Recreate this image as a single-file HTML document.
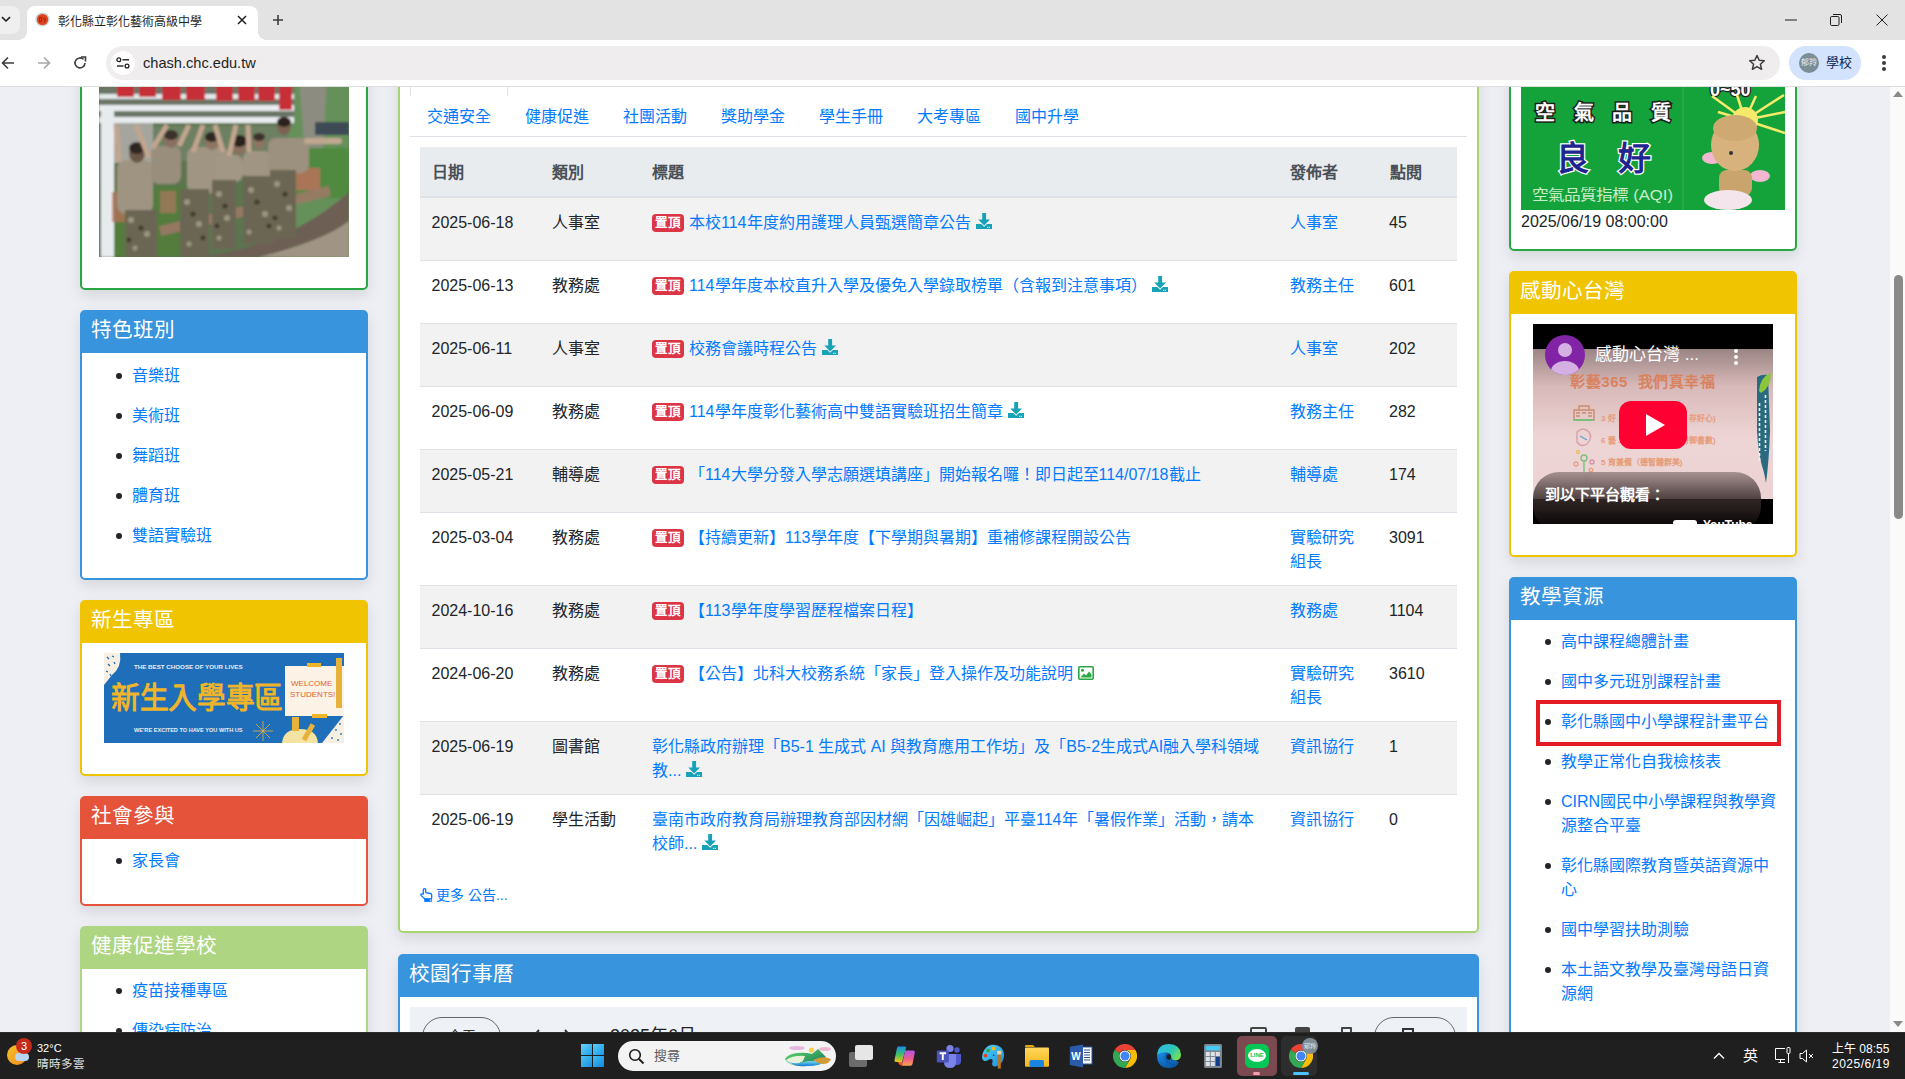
<!DOCTYPE html>
<html lang="zh-TW"><head><meta charset="utf-8">
<style>
*{box-sizing:border-box;margin:0;padding:0}
html,body{width:1905px;height:1079px;overflow:hidden;font-family:"Liberation Sans",sans-serif;color:#212529;font-size:16px}
body{position:relative;background:#eeeff4}
.a{position:absolute}
/* chrome */
#tabstrip{z-index:10;left:0;top:0;width:1905px;height:40px;background:#e3e3e3}
#toolbar{z-index:10;left:0;top:40px;width:1905px;height:47px;background:#fff;border-bottom:1px solid #dedede}
#page{left:0;top:86px;width:1890px;height:946px;background:#eeeff4;overflow:hidden;border-top:1px solid #e6e6e6}
#taskbar{z-index:10;left:0;top:1032px;width:1905px;height:47px;background:#1f1f1f}
.card{position:absolute;background:#fff;border:2px solid;border-radius:5px;box-shadow:0 6px 14px rgba(0,0,0,.10)}
.hd{position:absolute;left:0;top:0;right:0;height:41px;color:#fff;font-size:20.6px;line-height:36px;padding-left:9px}
.lnk{color:#007bff}
.li{position:absolute;margin-top:-1px;margin-left:-1px;font-size:16px;line-height:24px;color:#007bff;white-space:nowrap}
.li:before{content:"";position:absolute;left:-16.5px;top:8.5px;width:6px;height:6px;border-radius:50%;background:#212529}
.li2{position:absolute;top:105px;font-size:16px;line-height:24px;color:#007bff;white-space:nowrap}
.th{position:absolute;top:161px;font-size:16px;line-height:24px;font-weight:bold;color:#495057;white-space:nowrap}
.row{position:absolute;left:420px;width:1037px;border-top:1px solid #dee2e6}
.td{position:absolute;top:12.5px;font-size:16px;line-height:24px;white-space:nowrap}
.badge{display:inline-block;background:#dc3545;color:#fff;font-size:12.5px;font-weight:bold;line-height:18px;height:18px;padding:0 3px;border-radius:4px;vertical-align:1px;margin-right:5px}
.dl{display:inline-block;vertical-align:-1px;margin-left:5px}
.aq1{color:#fff;font-size:20px;font-weight:bold;line-height:24px;white-space:nowrap;text-shadow:-1px -1px 0 #222,1px -1px 0 #222,-1px 1px 0 #222,1px 1px 0 #222}
.aq2{color:#1c2a8c;font-size:34px;font-weight:bold;line-height:36px;white-space:nowrap;text-shadow:-1px -1px 0 #fff,1px -1px 0 #fff,-1px 1px 0 #fff,1px 1px 0 #fff}
.aq3{color:#c8ecc8;font-size:15px;line-height:18px;white-space:nowrap}
.chr{width:24px;height:24px;border-radius:50%;background:conic-gradient(from -50deg,#db4437 0 120deg,#f4c20d 120deg 240deg,#0f9d58 240deg 360deg)}
.chr:after{content:"";position:absolute;left:6px;top:6px;width:12px;height:12px;border-radius:50%;background:#4285f4;box-shadow:0 0 0 2px #fff}
</style></head><body>
<div id="tabstrip" class="a">
  <div class="a" style="left:-12px;top:6px;width:32px;height:28px;border-radius:8px;background:#efefef"></div>
  <svg class="a" style="left:1px;top:16px" width="10" height="7" viewBox="0 0 10 7"><path d="M1 1.2 L5 5 L9 1.2" fill="none" stroke="#1f1f1f" stroke-width="1.6"/></svg>
  <div class="a" style="left:27px;top:6px;width:231px;height:34px;border-radius:8px 8px 0 0;background:#fff"></div>
  <div class="a" style="left:19px;top:32px;width:8px;height:8px;background:radial-gradient(circle at 0 0,#e3e3e3 7.5px,#fff 8px)"></div>
  <div class="a" style="left:258px;top:32px;width:8px;height:8px;background:radial-gradient(circle at 8px 0,#e3e3e3 7.5px,#fff 8px)"></div>
  <svg class="a" style="left:35px;top:12px" width="15" height="15" viewBox="0 0 15 15"><circle cx="7.5" cy="7.5" r="7" fill="#c9d0d3"/><circle cx="7.5" cy="7.5" r="5.6" fill="#e0401a"/><path d="M4.5 5.5h2v4h-2zM8 6l2.5 1-1 3" stroke="#7a2a18" stroke-width="0.8" fill="none"/></svg>
  <div class="a" style="left:57.5px;top:13.5px;font-size:12px;line-height:16px;color:#1f1f1f;white-space:nowrap">彰化縣立彰化藝術高級中學</div>
  <svg class="a" style="left:237px;top:15px" width="10" height="10" viewBox="0 0 10 10"><path d="M1 1L9 9M9 1L1 9" stroke="#1f1f1f" stroke-width="1.5"/></svg>
  <svg class="a" style="left:272px;top:14px" width="12" height="12" viewBox="0 0 12 12"><path d="M6 1V11M1 6H11" stroke="#3c3c3c" stroke-width="1.6"/></svg>
  <svg class="a" style="left:1785px;top:19px" width="12" height="2" viewBox="0 0 12 2"><path d="M0 1H12" stroke="#1f1f1f" stroke-width="1"/></svg>
  <svg class="a" style="left:1830px;top:14px" width="12" height="12" viewBox="0 0 12 12"><rect x="0.5" y="2.5" width="8.5" height="9" rx="1.2" fill="none" stroke="#1f1f1f" stroke-width="1"/><path d="M3 0.5H10 Q11.5 0.5 11.5 2V9" fill="none" stroke="#1f1f1f" stroke-width="1"/></svg>
  <svg class="a" style="left:1876px;top:14px" width="12" height="12" viewBox="0 0 12 12"><path d="M0.5 0.5L11.5 11.5M11.5 0.5L0.5 11.5" stroke="#1f1f1f" stroke-width="1"/></svg>
</div>
<div id="toolbar" class="a">
  <svg class="a" style="left:1px;top:16px" width="14" height="14" viewBox="0 0 14 14"><path d="M13 7H2M7 1.5L1.5 7L7 12.5" fill="none" stroke="#3c3c3c" stroke-width="1.6"/></svg>
  <svg class="a" style="left:37px;top:16px" width="14" height="14" viewBox="0 0 14 14"><path d="M1 7H12M7 1.5L12.5 7L7 12.5" fill="none" stroke="#a6a6a6" stroke-width="1.6"/></svg>
  <svg class="a" style="left:73px;top:16px" width="14" height="14" viewBox="0 0 14 14"><path d="M12 7A5 5 0 1 1 10.5 3.3" fill="none" stroke="#3c3c3c" stroke-width="1.6"/><path d="M8 1H12.5V5.5" fill="none" stroke="#3c3c3c" stroke-width="1.6"/></svg>
  <div class="a" style="left:106px;top:6px;width:1674px;height:34px;border-radius:17px;background:#efeded"></div>
  <div class="a" style="left:111px;top:11px;width:24px;height:24px;border-radius:50%;background:#fff"></div>
  <svg class="a" style="left:116px;top:17px" width="14" height="12" viewBox="0 0 14 12"><circle cx="2.8" cy="2.8" r="1.9" fill="none" stroke="#1f1f1f" stroke-width="1.3"/><path d="M6.5 2.8H13" stroke="#1f1f1f" stroke-width="1.4"/><circle cx="11" cy="9" r="1.9" fill="none" stroke="#1f1f1f" stroke-width="1.3"/><path d="M1 9H7.5" stroke="#1f1f1f" stroke-width="1.4"/></svg>
  <div class="a" style="left:143px;top:13px;font-size:14.6px;line-height:20px;color:#1f1f1f;white-space:nowrap">chash.chc.edu.tw</div>
  <svg class="a" style="left:1748px;top:14px" width="18" height="18" viewBox="0 0 18 18"><path d="M9 1.5L11.2 6.3L16.3 6.8L12.4 10.2L13.6 15.3L9 12.6L4.4 15.3L5.6 10.2L1.7 6.8L6.8 6.3Z" fill="none" stroke="#3c3c3c" stroke-width="1.5" stroke-linejoin="round"/></svg>
  <div class="a" style="left:1789px;top:6px;width:72px;height:34px;border-radius:17px;background:#d3e3fd"></div>
  <div class="a" style="left:1799px;top:13px;width:20px;height:20px;border-radius:50%;background:#7b8d96;color:#e8eef2;font-size:8px;line-height:20px;text-align:center">郁羚</div>
  <div class="a" style="left:1826px;top:14px;font-size:13px;line-height:18px;color:#0b2a5c;white-space:nowrap">學校</div>
  <div class="a" style="left:1882px;top:15px;width:4px;height:4px;border-radius:50%;background:#3c3c3c;box-shadow:0 6px 0 #3c3c3c,0 12px 0 #3c3c3c"></div>
</div>
<div id="page" class="a"></div>

<!-- LEFT COLUMN -->
<div class="card" style="left:80px;top:40px;width:288px;height:250px;border-color:#28a745">
  <svg class="a" style="left:17px;top:41px" width="250" height="174" viewBox="0 -3 250 174">
<defs><filter id="bl" x="-5%" y="-5%" width="110%" height="110%"><feGaussianBlur stdDeviation="0.9"/></filter></defs>
<g filter="url(#bl)">
<rect x="-5" y="-8" width="260" height="184" fill="#5b7450"/>
<rect x="6" y="37" width="48" height="40" fill="#a4a69e"/>
<rect x="54" y="40" width="140" height="35" fill="#6d8062"/>
<rect x="190" y="-8" width="65" height="184" fill="#66905a"/>
<path d="M200 -8 H228 L223 82 H207 Z" fill="#8d8c80"/>
<rect x="216" y="36" width="34" height="13" fill="#3e4955"/>
<rect x="196" y="62" width="58" height="50" fill="#4f8a40"/>
<rect x="197" y="82" width="24" height="22" fill="#b8705a" opacity=".85"/>
<rect x="0" y="-8" width="195" height="45" fill="#6a7566"/>
<rect x="0" y="8" width="195" height="5" fill="#e4e8ea"/>
<rect x="0" y="19" width="195" height="6" fill="#eaedf0"/>
<rect x="0" y="31" width="195" height="6" fill="#e8ebee"/>
<g fill="#c62e38"><rect x="18" y="-5" width="17" height="16"/><rect x="40" y="-5" width="17" height="16"/><rect x="63" y="-3" width="19" height="17"/><rect x="87" y="-3" width="19" height="17"/><rect x="117" y="-2" width="17" height="17"/><rect x="139" y="-2" width="17" height="17"/><rect x="159" y="-2" width="17" height="17"/><rect x="180" y="0" width="13" height="24"/></g>
<rect x="2" y="25" width="13" height="146" fill="#e8ebee"/>
<rect x="15" y="100" width="80" height="71" fill="#527c3e"/>
<rect x="13" y="106" width="14" height="30" fill="#b07058" opacity=".8"/>
<rect x="61" y="105" width="16" height="22" fill="#a8785e" opacity=".75"/>
<path d="M60 140 L230 100 L232 110 L62 150Z" fill="#a07868" opacity=".85"/>
<path d="M100 171 Q190 160 250 106 L250 135 Q225 155 160 171Z" fill="#6e5e55"/>
<path d="M160 171 Q225 155 250 135 L250 171Z" fill="#a09584"/>
<!-- shirts -->
<rect x="18" y="74" width="36" height="54" rx="9" fill="#9f9482"/>
<rect x="52" y="60" width="30" height="38" rx="8" fill="#998e7c"/>
<rect x="88" y="61" width="41" height="46" rx="8" fill="#a09482"/>
<rect x="116" y="69" width="28" height="27" rx="8" fill="#a29684"/>
<rect x="144" y="65" width="29" height="30" rx="8" fill="#a09583"/>
<rect x="169" y="52" width="41" height="35" rx="8" fill="#9c907e"/>
<rect x="205" y="52" width="38" height="6" rx="3" fill="#c0a890"/>
<ellipse cx="38" cy="67" rx="8" ry="10" fill="#6a5646"/><ellipse cx="38" cy="62" rx="8" ry="6" fill="#2e2620"/>
<ellipse cx="72" cy="53" rx="7" ry="9" fill="#8a7060"/><ellipse cx="72" cy="49" rx="7" ry="5" fill="#3a302a"/>
<ellipse cx="113" cy="55" rx="7" ry="9" fill="#8e7464"/><ellipse cx="113" cy="51" rx="7" ry="5" fill="#2e2620"/>
<ellipse cx="140" cy="60" rx="7" ry="9" fill="#8a7060"/><ellipse cx="140" cy="55" rx="8" ry="6" fill="#2a221c"/>
<ellipse cx="160" cy="55" rx="6" ry="8" fill="#8e7464"/><ellipse cx="160" cy="51" rx="6" ry="4" fill="#3a302a"/>
<ellipse cx="185" cy="40" rx="7" ry="9" fill="#7a6252"/><ellipse cx="185" cy="36" rx="7" ry="5" fill="#2a221c"/>
<path d="M20 76 L17 39 M50 72 L37 39 M54 62 L68 39 M80 60 L90 39 M94 66 L104 39 M124 66 L116 39 M130 70 L137 39 M150 66 L149 39" stroke="#c2a58f" stroke-width="5"/>
<!-- pants -->
<g fill="#6b6652"><rect x="26" y="124" width="32" height="47"/><rect x="81" y="103" width="29" height="68"/><rect x="113" y="94" width="24" height="69"/><rect x="144" y="90" width="32" height="68"/><rect x="171" y="84" width="26" height="68"/></g>
<g fill="#9a9680"><circle cx="32" cy="134" r="3"/><circle cx="48" cy="148" r="3"/><circle cx="36" cy="162" r="2.5"/><circle cx="88" cy="116" r="3"/><circle cx="100" cy="138" r="3"/><circle cx="90" cy="158" r="2.5"/><circle cx="120" cy="108" r="3"/><circle cx="128" cy="132" r="3"/><circle cx="120" cy="152" r="2.5"/><circle cx="152" cy="104" r="3"/><circle cx="166" cy="128" r="3"/><circle cx="150" cy="146" r="2.5"/><circle cx="178" cy="98" r="3"/><circle cx="190" cy="122" r="3"/><circle cx="180" cy="142" r="2.5"/></g>
<g fill="#3f3a2e"><circle cx="42" cy="142" r="2.6"/><circle cx="30" cy="154" r="2.4"/><circle cx="94" cy="128" r="2.6"/><circle cx="104" cy="152" r="2.4"/><circle cx="126" cy="120" r="2.6"/><circle cx="118" cy="140" r="2.4"/><circle cx="158" cy="116" r="2.6"/><circle cx="170" cy="140" r="2.4"/><circle cx="186" cy="108" r="2.6"/><circle cx="176" cy="132" r="2.4"/></g>
</g></svg>
</div>
<div class="card" style="left:80px;top:310px;width:288px;height:270px;border-color:#3894dc">
  <div class="hd" style="background:#3894dc">特色班別</div>
  <div class="li" style="left:51px;top:53px">音樂班</div>
  <div class="li" style="left:51px;top:93px">美術班</div>
  <div class="li" style="left:51px;top:133px">舞蹈班</div>
  <div class="li" style="left:51px;top:173px">體育班</div>
  <div class="li" style="left:51px;top:213px">雙語實驗班</div>
</div>
<div class="card" style="left:80px;top:600px;width:288px;height:176px;border-color:#f0c400">
  <div class="hd" style="background:#f0c400">新生專區</div>
  <svg class="a" style="left:22px;top:51px" width="240" height="90" viewBox="0 0 240 90">
<rect width="240" height="90" fill="#1f6eb9"/>
<path d="M0 0 H16 Q18 14 8 22 L0 32 Z" fill="#f6efe2"/><path d="M3 4l2 2M8 3l2 1M4 11l2 2M10 9l1 2M2 18l2 1M6 21l1 2" stroke="#1f6eb9" stroke-width="1.3"/>
<path d="M240 62 L218 90 H240 Z" fill="#f6efe2"/><path d="M236 70v2M232 76v2M237 80v2M228 84v2M234 86v2" stroke="#1f6eb9" stroke-width="1.3"/>
<text x="30" y="15.5" font-family="Liberation Sans" font-size="6.2" font-weight="bold" fill="#e8eef5">THE BEST CHOOSE OF YOUR LIVES</text>
<text x="30" y="78.5" font-family="Liberation Sans" font-size="5.6" font-weight="bold" fill="#e8eef5">WE'RE EXCITED TO HAVE YOU WITH US</text>
<text x="7" y="55" font-family="Liberation Sans" font-size="30" font-weight="bold" fill="#f0b42a" textLength="172" lengthAdjust="spacingAndGlyphs">新生入學專區</text>
<rect x="181" y="13" width="60" height="50" fill="#fcf2e6"/>
<rect x="203" y="10" width="14" height="4" fill="#f0b42a"/>
<rect x="208" y="61" width="15" height="4" fill="#f0b42a"/>
<text x="187" y="33" font-family="Liberation Sans" font-size="8" fill="#e0622e">WELCOME</text>
<text x="186" y="44" font-family="Liberation Sans" font-size="8" fill="#e0622e">STUDENTS!</text>
<path d="M159 68 V88 M149 78 H169 M152 71 L166 85 M166 71 L152 85" stroke="#e9b53a" stroke-width="0.8"/>
<path d="M178 92 Q178 76 196 76 Q214 76 214 92 Z" fill="#f5e3a3"/>
<rect x="188" y="64" width="7" height="14" fill="#e6b23a"/>
<rect x="202" y="70" width="5" height="18" fill="#e6b23a" transform="rotate(30 204 79)"/>
<rect x="232" y="5" width="6" height="50" fill="#e6b23a"/>
</svg>
</div>
<div class="card" style="left:80px;top:796px;width:288px;height:110px;border-color:#e5533a">
  <div class="hd" style="background:#e5533a">社會參與</div>
  <div class="li" style="left:51px;top:52px">家長會</div>
</div>
<div class="card" style="left:80px;top:926px;width:288px;height:200px;border-color:#aed581">
  <div class="hd" style="background:#aed581">健康促進學校</div>
  <div class="li" style="left:51px;top:52px">疫苗接種專區</div>
  <div class="li" style="left:51px;top:92px">傳染病防治</div>
</div>


<!-- MIDDLE COLUMN -->
<div class="card" style="left:398px;top:40px;width:1081px;height:893px;border-color:#a7d473">
  <div class="a" style="left:10px;top:0;width:1px;height:54px;background:#dee2e6"></div>
  <div class="a" style="left:107px;top:0;width:1px;height:54px;background:#dee2e6"></div>
  <div class="a" style="left:10px;top:94px;width:1057px;height:1px;background:#dee2e6"></div>
</div>
<div class="tabs">
  <div class="li2" style="left:427px">交通安全</div>
  <div class="li2" style="left:525px">健康促進</div>
  <div class="li2" style="left:623px">社團活動</div>
  <div class="li2" style="left:721px">獎助學金</div>
  <div class="li2" style="left:819px">學生手冊</div>
  <div class="li2" style="left:917px">大考專區</div>
  <div class="li2" style="left:1015px">國中升學</div>
</div>
<div class="a" style="left:420px;top:147px;width:1037px;height:51px;background:#e9ecef;border-bottom:2px solid #dee2e6"></div>
<div class="th" style="left:432px">日期</div>
<div class="th" style="left:552px">類別</div>
<div class="th" style="left:652px">標題</div>
<div class="th" style="left:1290px">發佈者</div>
<div class="th" style="left:1390px">點閱</div>
<div class="row" style="top:198px;height:62px;background:#f2f2f2;border-top:none;"><div class="td" style="left:11.5px">2025-06-18</div><div class="td" style="left:132px">人事室</div><div class="td lnk" style="left:232px"><span class="badge">置頂</span>本校114年度約用護理人員甄選簡章公告<svg class="dl" width="16" height="16" viewBox="0 0 16 16"><path d="M6.2 0h3.9v6.5h3.9L8.15 12.4 2.3 6.5h3.9z" fill="#17a2b8"/><path d="M0 11h5.3l2.85 2.8L11 11h5v5H0z" fill="#17a2b8"/><rect x="11" y="13.8" width="1.2" height="1" fill="#fff"/><rect x="12.8" y="13.8" width="1.2" height="1" fill="#fff"/></svg></div><div class="td lnk" style="left:870px">人事室</div><div class="td" style="left:969px">45</div></div>
<div class="row" style="top:260px;height:63px;"><div class="td" style="left:11.5px">2025-06-13</div><div class="td" style="left:132px">教務處</div><div class="td lnk" style="left:232px"><span class="badge">置頂</span>114學年度本校直升入學及優免入學錄取榜單（含報到注意事項）<svg class="dl" width="16" height="16" viewBox="0 0 16 16"><path d="M6.2 0h3.9v6.5h3.9L8.15 12.4 2.3 6.5h3.9z" fill="#17a2b8"/><path d="M0 11h5.3l2.85 2.8L11 11h5v5H0z" fill="#17a2b8"/><rect x="11" y="13.8" width="1.2" height="1" fill="#fff"/><rect x="12.8" y="13.8" width="1.2" height="1" fill="#fff"/></svg></div><div class="td lnk" style="left:870px">教務主任</div><div class="td" style="left:969px">601</div></div>
<div class="row" style="top:323px;height:63px;background:#f2f2f2;"><div class="td" style="left:11.5px">2025-06-11</div><div class="td" style="left:132px">人事室</div><div class="td lnk" style="left:232px"><span class="badge">置頂</span>校務會議時程公告<svg class="dl" width="16" height="16" viewBox="0 0 16 16"><path d="M6.2 0h3.9v6.5h3.9L8.15 12.4 2.3 6.5h3.9z" fill="#17a2b8"/><path d="M0 11h5.3l2.85 2.8L11 11h5v5H0z" fill="#17a2b8"/><rect x="11" y="13.8" width="1.2" height="1" fill="#fff"/><rect x="12.8" y="13.8" width="1.2" height="1" fill="#fff"/></svg></div><div class="td lnk" style="left:870px">人事室</div><div class="td" style="left:969px">202</div></div>
<div class="row" style="top:386px;height:63px;"><div class="td" style="left:11.5px">2025-06-09</div><div class="td" style="left:132px">教務處</div><div class="td lnk" style="left:232px"><span class="badge">置頂</span>114學年度彰化藝術高中雙語實驗班招生簡章<svg class="dl" width="16" height="16" viewBox="0 0 16 16"><path d="M6.2 0h3.9v6.5h3.9L8.15 12.4 2.3 6.5h3.9z" fill="#17a2b8"/><path d="M0 11h5.3l2.85 2.8L11 11h5v5H0z" fill="#17a2b8"/><rect x="11" y="13.8" width="1.2" height="1" fill="#fff"/><rect x="12.8" y="13.8" width="1.2" height="1" fill="#fff"/></svg></div><div class="td lnk" style="left:870px">教務主任</div><div class="td" style="left:969px">282</div></div>
<div class="row" style="top:449px;height:63px;background:#f2f2f2;"><div class="td" style="left:11.5px">2025-05-21</div><div class="td" style="left:132px">輔導處</div><div class="td lnk" style="left:232px"><span class="badge">置頂</span>「114大學分發入學志願選填講座」開始報名囉！即日起至114/07/18截止</div><div class="td lnk" style="left:870px">輔導處</div><div class="td" style="left:969px">174</div></div>
<div class="row" style="top:512px;height:73px;"><div class="td" style="left:11.5px">2025-03-04</div><div class="td" style="left:132px">教務處</div><div class="td lnk" style="left:232px"><span class="badge">置頂</span>【持續更新】113學年度【下學期與暑期】重補修課程開設公告</div><div class="td lnk" style="left:870px">實驗研究<br>組長</div><div class="td" style="left:969px">3091</div></div>
<div class="row" style="top:585px;height:63px;background:#f2f2f2;"><div class="td" style="left:11.5px">2024-10-16</div><div class="td" style="left:132px">教務處</div><div class="td lnk" style="left:232px"><span class="badge">置頂</span>【113學年度學習歷程檔案日程】</div><div class="td lnk" style="left:870px">教務處</div><div class="td" style="left:969px">1104</div></div>
<div class="row" style="top:648px;height:73px;"><div class="td" style="left:11.5px">2024-06-20</div><div class="td" style="left:132px">教務處</div><div class="td lnk" style="left:232px"><span class="badge">置頂</span>【公告】北科大校務系統「家長」登入操作及功能說明<svg class="dl" width="16" height="14" viewBox="0 0 16 14"><rect x="0.8" y="0.8" width="14.4" height="12.4" rx="1" fill="none" stroke="#28a745" stroke-width="1.6"/><circle cx="4.5" cy="4.3" r="1.5" fill="#28a745"/><path d="M2.5 11.5 L6 7.5 L8 9.5 L11 5.5 L13.5 8.5 V11.5 Z" fill="#28a745"/></svg></div><div class="td lnk" style="left:870px">實驗研究<br>組長</div><div class="td" style="left:969px">3610</div></div>
<div class="row" style="top:721px;height:73px;background:#f2f2f2;"><div class="td" style="left:11.5px">2025-06-19</div><div class="td" style="left:132px">圖書館</div><div class="td lnk" style="left:232px">彰化縣政府辦理「B5-1 生成式 AI 與教育應用工作坊」及「B5-2生成式AI融入學科領域<br>教...<svg class="dl" width="16" height="16" viewBox="0 0 16 16"><path d="M6.2 0h3.9v6.5h3.9L8.15 12.4 2.3 6.5h3.9z" fill="#17a2b8"/><path d="M0 11h5.3l2.85 2.8L11 11h5v5H0z" fill="#17a2b8"/><rect x="11" y="13.8" width="1.2" height="1" fill="#fff"/><rect x="12.8" y="13.8" width="1.2" height="1" fill="#fff"/></svg></div><div class="td lnk" style="left:870px">資訊協行</div><div class="td" style="left:969px">1</div></div>
<div class="row" style="top:794px;height:73px;"><div class="td" style="left:11.5px">2025-06-19</div><div class="td" style="left:132px">學生活動</div><div class="td lnk" style="left:232px">臺南市政府教育局辦理教育部因材網「因雄崛起」平臺114年「暑假作業」活動，請本<br>校師...<svg class="dl" width="16" height="16" viewBox="0 0 16 16"><path d="M6.2 0h3.9v6.5h3.9L8.15 12.4 2.3 6.5h3.9z" fill="#17a2b8"/><path d="M0 11h5.3l2.85 2.8L11 11h5v5H0z" fill="#17a2b8"/><rect x="11" y="13.8" width="1.2" height="1" fill="#fff"/><rect x="12.8" y="13.8" width="1.2" height="1" fill="#fff"/></svg></div><div class="td lnk" style="left:870px">資訊協行</div><div class="td" style="left:969px">0</div></div>
<div class="a lnk" style="left:420px;top:885px;font-size:14px;line-height:20px;white-space:nowrap"><svg width="13" height="14" viewBox="0 0 13 14" style="vertical-align:-2px;margin-right:3px"><path d="M3.3 6.2V1.9Q3.3 0.7 4.5 0.7Q5.7 0.7 5.7 1.9V4.7L10.4 5.5Q11.7 5.8 11.7 7.1V9.6Q11.7 10.6 10.9 10.9H4.7L1.1 7.4Q0.5 6.7 1.1 6.1Q1.8 5.5 2.5 6.1Z" fill="none" stroke="#007bff" stroke-width="1.3" stroke-linejoin="round"/><rect x="4.2" y="10.6" width="7.6" height="3.3" fill="#007bff"/><rect x="9.8" y="11.4" width="0.9" height="1.8" fill="#fff"/></svg>更多 公告...</div>
<div class="card" style="left:398px;top:954px;width:1081px;height:200px;border-color:#3894dc">
  <div class="hd" style="background:#3894dc">校園行事曆</div>
  <div class="a" style="left:10px;top:51px;width:1057px;height:100px;background:#eef1f6"></div>
  <div class="a" style="left:22px;top:61px;width:79px;height:40px;border:1px solid #666;border-radius:20px"></div>
  <div class="a" style="left:48px;top:72px;font-size:14px;line-height:16px;color:#333">今天</div>
  <svg class="a" style="left:131px;top:73px" width="10" height="16" viewBox="0 0 10 16"><path d="M8 1L2 8L8 15" fill="none" stroke="#333" stroke-width="2"/></svg>
  <svg class="a" style="left:163px;top:73px" width="10" height="16" viewBox="0 0 10 16"><path d="M2 1L8 8L2 15" fill="none" stroke="#333" stroke-width="2"/></svg>
  <div class="a" style="left:210px;top:68px;font-size:18px;line-height:24px;color:#222">2025年6月</div>
  <div class="a" style="left:850px;top:71px;width:17px;height:14px;border:2px solid #444;border-radius:2px"></div>
  <div class="a" style="left:895px;top:71px;width:15px;height:14px;background:#444;border-radius:2px"></div>
  <div class="a" style="left:941px;top:71px;width:11px;height:14px;border:2px solid #444;border-radius:1px"></div>
  <div class="a" style="left:974px;top:61px;width:82px;height:40px;border:1px solid #666;border-radius:20px"></div>
  <div class="a" style="left:1002px;top:72px;width:12px;height:10px;border:2px solid #333"></div>
</div>
<!-- RIGHT COLUMN -->
<div class="card" style="left:1509px;top:40px;width:288px;height:211px;border-color:#28a745">
  <svg class="a" style="left:10px;top:0" width="264" height="168" viewBox="0 0 264 168">
<rect width="264" height="168" fill="#14a23b"/>
<path d="M162 44 V168" stroke="#3cae5a" stroke-width="1"/>
<g font-family="Liberation Sans" font-weight="bold">
<text x="14" y="78" font-size="20" fill="#fff" stroke="#1d1d1d" stroke-width="3" paint-order="stroke" textLength="136" lengthAdjust="spacing">空氣品質</text>
<text x="35" y="128" font-size="33" fill="#1f2590" stroke="#fff" stroke-width="2.5" paint-order="stroke" textLength="95" lengthAdjust="spacing">良好</text>
</g>
<text x="11" y="157.5" font-family="Liberation Sans" font-size="14.5" fill="#c9ecc9" textLength="141" lengthAdjust="spacingAndGlyphs">空氣品質指標 (AQI)</text>
<g transform="translate(-1521 -42)">
<text x="1710" y="96" font-family="Liberation Sans" font-weight="bold" font-size="18" fill="#fff" stroke="#222" stroke-width="2.5" paint-order="stroke">0~50</text>
<path d="M1745 120 L1712 96 M1745 120 L1737 95 M1745 120 L1756 96 M1745 120 L1784 95 M1745 120 L1785 112 M1745 120 L1785 133 M1745 120 L1718 112" stroke="#f7e96a" stroke-width="2.5"/>
<circle cx="1745" cy="120" r="13" fill="#f7e96a"/>
<ellipse cx="1712" cy="158" rx="10" ry="6" fill="#f2b8d2"/>
<ellipse cx="1760" cy="176" rx="10" ry="6" fill="#f2b8d2"/>
<rect x="1719" y="170" width="33" height="26" rx="8" fill="#c9a46c"/>
<ellipse cx="1735" cy="145" rx="24" ry="26" fill="#d8b27c"/>
<ellipse cx="1735" cy="128" rx="22" ry="13" fill="#ceaa72"/>
<circle cx="1731" cy="153" r="2" fill="#333"/>
<ellipse cx="1728" cy="200" rx="24" ry="10" fill="#f4e4ec"/>
</g>
</svg>
<div class="a" style="left:10px;top:168px;font-size:16px;line-height:24px">2025/06/19 08:00:00</div>
</div>
<div class="card" style="left:1509px;top:271px;width:288px;height:286px;border-color:#f0c400">
  <div class="hd" style="background:#f0c400">感動心台灣</div>
  <div class="a" style="left:22px;top:51px;width:240px;height:200px;background:#000;overflow:hidden">
    <div class="a" style="left:0;top:25px;width:240px;height:150px;background:linear-gradient(180deg,#9a8584 0%,#d9b9b9 25%,#eed5d5 60%,#ecd2d2 100%)"></div>
    <div class="a" style="left:12px;top:11px;width:40px;height:40px;border-radius:50%;background:#8124a6;overflow:hidden">
      <div class="a" style="left:13px;top:8px;width:14px;height:14px;border-radius:50%;background:#d5b1e3"></div>
      <div class="a" style="left:6px;top:26px;width:28px;height:20px;border-radius:50%;background:#d5b1e3"></div>
    </div>
    <div class="a" style="left:62px;top:20px;color:#fff;font-size:17px;line-height:22px">感動心台灣 ...</div>
    <div class="a" style="left:201px;top:25px;width:4px;height:4px;border-radius:50%;background:#fff;box-shadow:0 6px 0 #fff,0 12px 0 #fff"></div>
    <div class="a" style="left:37px;top:49px;color:#d9825f;font-size:15px;font-weight:bold;line-height:18px;white-space:nowrap;letter-spacing:0.6px">彰藝365 &nbsp;我們真幸福</div>
    <svg class="a" style="left:38px;top:78px" width="26" height="72" viewBox="0 0 26 72">
    <g fill="none" stroke-width="1.4"><path d="M3 18V8H23V18ZM8 8V4H18V8M5 11H9M11 11H15M17 11H21M5 14H9M17 14H21" stroke="#c98a6e"/><path d="M3 18H23" stroke="#7cbf7c" stroke-width="2"/>
    <path d="M6 30Q12 24 18 30Q22 36 16 42Q10 46 6 40Z" stroke="#d7a0a8"/><path d="M9 34L16 38" stroke="#6aa0c8"/>
    <circle cx="13" cy="56" r="3" stroke="#7cbf7c"/><path d="M13 59V70" stroke="#7cbf7c"/><circle cx="5" cy="62" r="2" stroke="#e8a088"/><circle cx="21" cy="60" r="2" stroke="#d890a8"/><circle cx="7" cy="50" r="1.5" stroke="#e8c070"/><circle cx="20" cy="68" r="1.8" stroke="#e8a088"/></g>
    </svg>
    <div class="a" style="left:68px;top:84px;font-size:8px;line-height:22px;color:#e69c78;white-space:nowrap;font-weight:bold">3 好 ................... (好話、存好心)<br>6 藝 ................... (禮樂射御書數)<br>5 育兼備（德智體群美)</div>
    <svg class="a" style="left:220px;top:47px" width="20" height="114" viewBox="0 0 20 114">
    <path d="M4 6 Q9 3 15 4 L17 60 Q16 90 13 112 Q11 100 9 95 Q5 80 4 60Z" fill="#2a6a80"/>
    <path d="M6 20 Q7 6 18 2 Q18 16 8 22Z" fill="#8cc63f"/>
    <g stroke="#f2f2f2" stroke-width="1.6" stroke-dasharray="3 2"><path d="M12.5 24V80"/><path d="M6.5 32V92"/></g>
    </svg>
    <div class="a" style="left:86px;top:77px;width:68px;height:48px;border-radius:12px;background:#ff0033"></div>
    <div class="a" style="left:113px;top:90px;width:0;height:0;border-left:19px solid #fff;border-top:11px solid transparent;border-bottom:11px solid transparent"></div>
    <div class="a" style="left:0;top:148px;width:228px;height:60px;border-radius:26px;background:linear-gradient(180deg,rgba(120,100,100,.6) 0%,rgba(40,30,30,.95) 60%,#000 100%)"></div>
    <div class="a" style="left:12px;top:162px;color:#fff;font-size:15px;font-weight:bold;line-height:18px">到以下平台觀看：</div>
    <div class="a" style="left:140px;top:196px;width:24px;height:8px;border-radius:3px;background:#fff"></div><div class="a" style="left:170px;top:194px;color:#fff;font-size:12px;font-weight:bold;line-height:14px">YouTube</div>
  </div>
</div>
<div class="card" style="left:1509px;top:577px;width:288px;height:520px;border-color:#3894dc">
  <div class="hd" style="background:#3894dc">教學資源</div>
  <div class="li" style="left:51px;top:52px">高中課程總體計畫</div>
  <div class="li" style="left:51px;top:92px">國中多元班別課程計畫</div>
  <div class="li" style="left:51px;top:132px">彰化縣國中小學課程計畫平台</div>
  <div class="li" style="left:51px;top:172px">教學正常化自我檢核表</div>
  <div class="li" style="left:51px;top:212px">CIRN國民中小學課程與教學資<br>源整合平臺</div>
  <div class="li" style="left:51px;top:276px">彰化縣國際教育暨英語資源中<br>心</div>
  <div class="li" style="left:51px;top:340px">國中學習扶助測驗</div>
  <div class="li" style="left:51px;top:380px">本土語文教學及臺灣母語日資<br>源網</div>
</div>
<div class="a" style="left:1536px;top:700px;width:245px;height:46px;border:4px solid #e31b23"></div>
<!-- SCROLLBAR -->
<div class="a" style="left:1890px;top:87px;width:15px;height:945px;background:#fafafa"></div>
<div class="a" style="left:1893px;top:91px;width:0;height:0;border-left:5px solid transparent;border-right:5px solid transparent;border-bottom:6px solid #8a8a8a"></div>
<div class="a" style="left:1893px;top:1021px;width:0;height:0;border-left:5px solid transparent;border-right:5px solid transparent;border-top:6px solid #8a8a8a"></div>
<div class="a" style="left:1894px;top:275px;width:9px;height:244px;border-radius:5px;background:#8a8a8a"></div>
<div id="taskbar" class="a">
  <div class="a" style="left:0;top:0;width:1905px;height:1px;background:#2e2e2e"></div>
  <div class="a" style="left:7px;top:13px;width:20px;height:20px;border-radius:50%;background:linear-gradient(135deg,#f7c22a,#f08a1c)"></div>
  <div class="a" style="left:15px;top:21px;width:14px;height:8px;border-radius:5px;background:#b8d4f2"></div>
  <div class="a" style="left:16px;top:6px;width:16px;height:16px;border-radius:50%;background:#c42b1c;color:#fff;font-size:11px;line-height:16px;text-align:center">3</div>
  <div class="a" style="left:37px;top:9px;font-size:11px;line-height:14px;color:#fff;white-space:nowrap">32°C</div>
  <div class="a" style="left:37px;top:25px;font-size:11.6px;line-height:14px;color:#e0e0e0;white-space:nowrap">晴時多雲</div>
  <!-- start -->
  <div class="a" style="left:581px;top:12px;width:11px;height:11px;background:linear-gradient(135deg,#6ad3fb,#1c9fea)"></div>
  <div class="a" style="left:593px;top:12px;width:11px;height:11px;background:linear-gradient(135deg,#5ccdf9,#1898e6)"></div>
  <div class="a" style="left:581px;top:24px;width:11px;height:11px;background:linear-gradient(135deg,#4fc4f6,#158fe0)"></div>
  <div class="a" style="left:593px;top:24px;width:11px;height:11px;background:linear-gradient(135deg,#43bdf4,#1287dc)"></div>
  <!-- search -->
  <div class="a" style="left:618px;top:9px;width:218px;height:30px;border-radius:15px;background:#f3f3f3"></div>
  <svg class="a" style="left:628px;top:16px" width="17" height="17" viewBox="0 0 17 17"><circle cx="7" cy="7" r="5.3" fill="none" stroke="#1a1a1a" stroke-width="1.6"/><path d="M11 11L15.5 15.5" stroke="#1a1a1a" stroke-width="1.8"/></svg>
  <div class="a" style="left:654px;top:16px;font-size:13px;line-height:16px;color:#5a5a5a">搜尋</div>
  <svg class="a" style="left:783px;top:12px" width="50" height="24" viewBox="0 0 50 24"><defs>
  <linearGradient id="lsW" x1="0" y1="0" x2="0" y2="1"><stop offset="0" stop-color="#7fe0e8"/><stop offset="1" stop-color="#0c78d8"/></linearGradient>
  <linearGradient id="lsG" x1="0" y1="0" x2="1" y2="1"><stop offset="0" stop-color="#5fe06a"/><stop offset="1" stop-color="#136e5a"/></linearGradient></defs>
  <ellipse cx="14" cy="4" rx="8" ry="2" fill="#e3b8e0"/><ellipse cx="42" cy="5" rx="6" ry="2" fill="#f2b8d0"/>
  <circle cx="28.5" cy="6" r="2.6" fill="#f6cf4a"/>
  <path d="M2 15 Q5 10 14 9 Q22 8 29 10 L35 5 L43 13 L36 19 Q20 24 10 21 Q4 19 2 15Z" fill="url(#lsG)"/>
  <path d="M3 16 Q10 11 22 12 L20 17 Q12 22 7 20Z" fill="#e8f0d8"/>
  <path d="M3 17 Q12 23 24 22 Q38 22 43 17 Q28 16 20 18 Q12 21 3 17Z" fill="url(#lsW)"/>
  <path d="M30 16 Q40 11 48 15 Q46 20 40 20 Q34 19 30 16Z" fill="#d39a35"/>
  </svg>
  <!-- task view -->
  <div class="a" style="left:849px;top:20px;width:18px;height:15px;border-radius:2px;background:#6b6b6b"></div>
  <div class="a" style="left:855px;top:13px;width:18px;height:15px;border-radius:2px;background:#e6e6e6"></div>
  <!-- copilot -->
  <svg class="a" style="left:893px;top:13px" width="24" height="22" viewBox="0 0 24 22"><defs>
  <linearGradient id="cpA" x1="0" y1="0" x2="0" y2="1"><stop offset="0" stop-color="#1a8cf0"/><stop offset=".5" stop-color="#3cc06a"/><stop offset="1" stop-color="#f2c414"/></linearGradient>
  <linearGradient id="cpB" x1="0" y1="0" x2="0" y2="1"><stop offset="0" stop-color="#b455e8"/><stop offset=".55" stop-color="#ee5c8c"/><stop offset="1" stop-color="#f9a84a"/></linearGradient></defs>
  <path d="M5 1.5 H12 Q13.5 1.5 13 3 L9 17 H3 Q1 17 1.5 15 L4 3 Q4.3 1.5 5 1.5Z" fill="url(#cpA)"/>
  <path d="M12 5.5 H20 Q22.2 5.5 21.8 7.5 L19.5 19 Q19 20.8 17.5 20.8 H10 Q8.5 20.8 9 19 L12 6.5Z" fill="url(#cpB)"/>
  <path d="M9 17 L10 20.8 Q6 20.8 5 17Z" fill="#f0583a"/>
  </svg>
  <!-- teams -->
  <svg class="a" style="left:936px;top:12px" width="26" height="24" viewBox="0 0 26 24">
  <circle cx="14" cy="4.5" r="3.6" fill="#7b83eb"/><circle cx="21" cy="6" r="2.7" fill="#5059c9"/>
  <path d="M17.5 10 H25 V17 Q25 21 21 21 Q18.5 21 17.5 19Z" fill="#5059c9"/>
  <path d="M8 10 H20 V18 Q20 24 14 24 Q8 24 8 18Z" fill="#7b83eb"/>
  <rect x="0.8" y="6.5" width="12" height="12" rx="1.2" fill="#4b53bc"/>
  <path d="M3.6 9.3H10M6.8 9.3V16" stroke="#fff" stroke-width="1.9"/>
  </svg>
  <!-- paint -->
  <svg class="a" style="left:981px;top:12px" width="24" height="25" viewBox="0 0 24 25"><defs><linearGradient id="ptA" x1="0" y1="0" x2="1" y2="1"><stop offset="0" stop-color="#4fd0f7"/><stop offset="1" stop-color="#1a8fe0"/></linearGradient></defs>
  <path d="M12 0.8 C19 0.8 23 5.5 23 11 C23 17.5 18.5 22.5 14 22.5 C11 22.5 10.8 20 11.5 18 C12.2 16 10.8 14.6 9 15.2 C6.5 16 4.5 18 2.5 16.5 C0.5 15 0.8 11 2.5 7.5 C4.5 3.5 8 0.8 12 0.8Z" fill="url(#ptA)"/>
  <circle cx="4.5" cy="11.6" r="1.9" fill="#e8401c"/><circle cx="7.2" cy="6.5" r="1.9" fill="#3aa635"/><circle cx="12.7" cy="4.4" r="1.9" fill="#f6b913"/>
  <path d="M12.7 10.5 L13.5 11.3 L12.7 12.1 L11.9 11.3Z" fill="#1c1c1c"/>
  <rect x="16.2" y="6.8" width="4.2" height="4" rx="0.8" fill="#f2d3a0"/><rect x="16.8" y="10.6" width="3" height="14" fill="#b8741e"/>
  </svg>
  <!-- explorer -->
  <svg class="a" style="left:1025px;top:13px" width="24" height="22" viewBox="0 0 24 22"><defs><linearGradient id="exA" x1="0" y1="0" x2="0" y2="1"><stop offset="0" stop-color="#ffd75a"/><stop offset="1" stop-color="#f5b81c"/></linearGradient></defs>
  <path d="M0 1 Q0 0 1 0 H8 L10 2 H0Z" fill="#e2a40c"/>
  <rect x="0" y="2.5" width="24" height="19.3" rx="1" fill="url(#exA)"/>
  <rect x="4.5" y="15" width="14.5" height="7" rx="1.5" fill="#1a86e0"/>
  </svg>
  <!-- word -->
  <svg class="a" style="left:1069px;top:12px" width="24" height="24" viewBox="0 0 24 24">
  <rect x="13" y="3" width="10" height="17" fill="#fff" stroke="#2b579a" stroke-width="1"/>
  <path d="M15 6H21M15 8.5H21M15 11H21M15 13.5H21M15 16H21" stroke="#2b579a" stroke-width="1"/>
  <path d="M0.8 2.8 L14 0.6 V23.4 L0.8 21Z" fill="#2b5aa8"/>
  <text x="2.2" y="16" font-family="Liberation Sans" font-weight="bold" font-size="10" fill="#fff">W</text>
  </svg>
  <!-- chrome -->
  <svg class="a" style="left:1113px;top:12px" width="24" height="24" viewBox="0 0 24 24"><path d="M1.6 6A12 12 0 0 1 22.4 6H12A6 6 0 0 0 6.8 9Z" fill="#ea4335"/><path d="M12 6H22.4A12 12 0 0 1 12 24L17.2 15A6 6 0 0 0 12 6Z" fill="#fbbc04"/><path d="M17.2 15L12 24A12 12 0 0 1 1.6 6L6.8 9A6 6 0 0 0 17.2 15Z" fill="#34a853"/><circle cx="12" cy="12" r="5.6" fill="#fff"/><circle cx="12" cy="12" r="4.5" fill="#4285f4"/></svg>
  <!-- edge -->
  <svg class="a" style="left:1156px;top:11px" width="26" height="26" viewBox="0 0 26 26"><defs>
  <linearGradient id="edA" x1="0" y1="0" x2="1" y2="0.6"><stop offset="0" stop-color="#2fb8f4"/><stop offset=".6" stop-color="#2cc4b8"/><stop offset="1" stop-color="#6ee05a"/></linearGradient>
  <linearGradient id="edB" x1="0" y1="0" x2="0.5" y2="1"><stop offset="0" stop-color="#1a8ee8"/><stop offset="1" stop-color="#0b5aa8"/></linearGradient></defs>
  <path d="M1 12 Q2 1 13 1 Q24 1 25 11.5 Q25 17 19.5 17.5 Q15 17.5 15 13.5 Q15 10 11 10 Q5 10 1 12Z" fill="url(#edA)"/>
  <path d="M1 12 Q5 8.5 11 9.5 Q8 12 9 16 Q11 22 19 21 Q22 20.5 23 19.5 Q20 25 13 25 Q1 25 1 12Z" fill="url(#edB)"/>
  <path d="M11 9.5 Q15 10 15 13.5 Q15 17.5 19.5 17.5 L23 19.5 Q22 20.5 19 21 Q11 22 9 16 Q8 12 11 9.5Z" fill="#0e64b8"/>
  <ellipse cx="12.8" cy="14" rx="2.3" ry="2.8" fill="#1c1c1c"/>
  </svg>
  <!-- calc -->
  <svg class="a" style="left:1204px;top:12px" width="18" height="24" viewBox="0 0 18 24">
  <rect x="0.3" y="0.3" width="17.4" height="23.4" rx="1.5" fill="#7d8893" stroke="#98a2ab" stroke-width=".6"/>
  <rect x="1.8" y="1.9" width="14.4" height="4.4" fill="#44ccf5"/>
  <g fill="#dde2e7"><rect x="1.8" y="8" width="4" height="4"/><rect x="6.8" y="8" width="4" height="4"/><rect x="11.8" y="8" width="4" height="4"/><rect x="1.8" y="13" width="4" height="4"/><rect x="6.8" y="13" width="4" height="4"/><rect x="1.8" y="18" width="4" height="4"/><rect x="6.8" y="18" width="4" height="4"/></g>
  <rect x="11.8" y="13" width="4" height="9" fill="#0f3f8c"/>
  </svg>
  <!-- line -->
  <div class="a" style="left:1237px;top:4px;width:40px;height:40px;border-radius:5px;background:#7a4a50"></div>
  <div class="a" style="left:1245px;top:12px;width:24px;height:24px;border-radius:6px;background:#06c755"></div>
  <div class="a" style="left:1248px;top:17px;width:18px;height:13px;border-radius:50%;background:#fff;color:#06c755;font-size:6px;font-weight:bold;line-height:13px;text-align:center">LINE</div>
  <div class="a" style="left:1253px;top:40px;width:7px;height:3px;border-radius:2px;background:#f5a0b0"></div>
  <!-- chrome active -->
  <div class="a" style="left:1281px;top:4px;width:36px;height:40px;border-radius:5px;background:#2d2d2d"></div>
  <svg class="a" style="left:1289px;top:12px" width="24" height="24" viewBox="0 0 24 24"><path d="M1.6 6A12 12 0 0 1 22.4 6H12A6 6 0 0 0 6.8 9Z" fill="#ea4335"/><path d="M12 6H22.4A12 12 0 0 1 12 24L17.2 15A6 6 0 0 0 12 6Z" fill="#fbbc04"/><path d="M17.2 15L12 24A12 12 0 0 1 1.6 6L6.8 9A6 6 0 0 0 17.2 15Z" fill="#34a853"/><circle cx="12" cy="12" r="5.6" fill="#fff"/><circle cx="12" cy="12" r="4.5" fill="#4285f4"/></svg>
  <div class="a" style="left:1302px;top:6px;width:16px;height:16px;border-radius:50%;background:#7f8d94;color:#dfe6ea;font-size:6px;line-height:16px;text-align:center">郁羚</div>
  <div class="a" style="left:1293px;top:40px;width:16px;height:3px;border-radius:2px;background:#4cc2ff"></div>
  <!-- tray -->
  <svg class="a" style="left:1713px;top:20px" width="12" height="8" viewBox="0 0 12 8"><path d="M1 6.5L6 1.5L11 6.5" fill="none" stroke="#fff" stroke-width="1.3"/></svg>
  <div class="a" style="left:1743px;top:15px;font-size:15px;line-height:18px;color:#fff">英</div>
  <svg class="a" style="left:1774px;top:15px" width="18" height="18" viewBox="0 0 18 18"><path d="M11 1.5H1.5V12.5H11M4.5 15.5H11M6.5 12.5V15.5" fill="none" stroke="#fff" stroke-width="1"/><rect x="13" y="0.5" width="3" height="6" rx="1" fill="none" stroke="#fff" stroke-width="1"/><path d="M14.5 6.5V16" stroke="#fff" stroke-width="1"/></svg>
  <svg class="a" style="left:1799px;top:17px" width="16" height="14" viewBox="0 0 16 14"><path d="M1 4.5H3.5L7.5 1V13L3.5 9.5H1Z" fill="none" stroke="#fff" stroke-width="1"/><path d="M10 5L14 9M14 5L10 9" stroke="#fff" stroke-width="1"/></svg>
  <div class="a" style="left:1832px;top:9px;font-size:12px;line-height:16px;color:#fff;white-space:nowrap">上午 08:55</div>
  <div class="a" style="left:1832px;top:24px;font-size:12px;line-height:16px;color:#fff;white-space:nowrap;letter-spacing:0.5px">2025/6/19</div>
</div>
</body></html>
